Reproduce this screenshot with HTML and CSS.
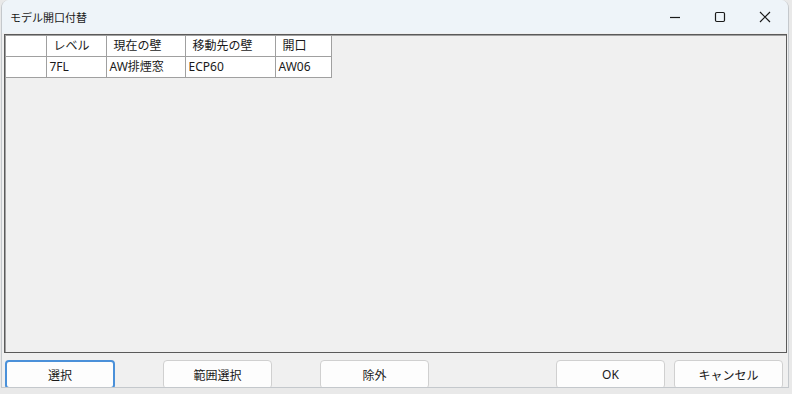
FILE: index.html
```html
<!DOCTYPE html>
<html lang="ja">
<head>
    <meta charset="UTF-8">
    <meta name="viewport" content="width=device-width, initial-scale=1.0">
    <title>モデル開口付替</title>
    <link rel="stylesheet" href="styles.css">
</head>
<body>
    <div class="window">
        <div class="titlebar">
            <div class="title">モデル開口付替</div>
            <div class="controls">
                <div class="ctrl">
                    <svg width="12" height="12" viewBox="0 0 12 12"><path d="M1 6.5h10" stroke="#1a1a1a" stroke-width="1.2"/></svg>
                </div>
                <div class="ctrl">
                    <svg width="12" height="12" viewBox="0 0 12 12"><rect x="1.5" y="1.5" width="9" height="9" rx="1.2" fill="none" stroke="#1a1a1a" stroke-width="1.2"/></svg>
                </div>
                <div class="ctrl">
                    <svg width="12" height="12" viewBox="0 0 12 12"><path d="M1 1l10 10M11 1L1 11" stroke="#1a1a1a" stroke-width="1.2"/></svg>
                </div>
            </div>
        </div>
        <div class="grid">
            <table class="sheet">
                <colgroup>
                    <col class="w0">
                    <col class="w1">
                    <col class="w2">
                    <col class="w3">
                    <col class="w4">
                </colgroup>
                <tr class="head">
                    <td class="rowhead"></td>
                    <td>レベル</td>
                    <td>現在の壁</td>
                    <td>移動先の壁</td>
                    <td>開口</td>
                </tr>
                <tr>
                    <td class="rowhead"></td>
                    <td>7FL</td>
                    <td>AW排煙窓</td>
                    <td>ECP60</td>
                    <td>AW06</td>
                </tr>
            </table>
        </div>
        <div class="buttons">
            <button class="btn focus">選択</button>
            <button class="btn">範囲選択</button>
            <button class="btn">除外</button>
            <div class="spacer"></div>
            <button class="btn">OK</button>
            <button class="btn">キャンセル</button>
        </div>
    </div>
</body>
</html>
```

FILE: styles.css
```css
body {
    margin: 0;
    padding: 0;
    width: 792px;
    height: 394px;
    overflow: hidden;
    background: #e9e9e9;
    font-family: "Noto Sans", "Noto Sans CJK JP", sans-serif;
    font-size: 12px;
    color: #1a1a1a;
}

.window {
    display: flex;
    flex-direction: column;
    width: 786px;
    height: 387px;
    margin-left: 1px;
    border: 1px solid #c4c8cc;
    border-top: none;
    border-radius: 8px 8px 0 0;
    background: #f0f0f0;
    overflow: hidden;
}

.titlebar {
    display: flex;
    align-items: center;
    height: 33px;
    background: #eef4f9;
    flex-shrink: 0;
}

.title {
    flex: 1;
    padding-left: 8px;
    font-size: 11px;
}

.controls {
    display: flex;
    height: 100%;
    padding-right: 1px;
}

.ctrl {
    display: flex;
    align-items: center;
    justify-content: center;
    width: 45px;
    height: 100%;
}

.grid {
    height: 317px;
    margin: 1px 1px 0 2px;
    border: 1px solid #5a5a5a;
    box-shadow: inset 1px 1px 0 #a0a0a0;
    background: #f0f0f0;
    flex-shrink: 0;
}

.sheet {
    table-layout: fixed;
    width: 325px;
    border-collapse: collapse;
    margin: 1px 0 0 1px;
}

.sheet .w0 { width: 40px; }
.sheet .w1 { width: 60px; }
.sheet .w2 { width: 79px; }
.sheet .w3 { width: 90px; }
.sheet .w4 { width: 56px; }

.sheet td {
    height: 20px;
    padding: 0 0 0 3px;
    background: #fff;
    border: 1px solid #a0a0a0;
    border-top: none;
    font-size: 12px;
    line-height: 20px;
    white-space: nowrap;
    overflow: hidden;
}

.sheet .head td {
    padding-left: 7px;
}

.sheet td.rowhead {
    border-left: none;
}

.buttons {
    display: flex;
    gap: 48px;
    padding: 7px 0 0 3px;
}

.spacer {
    flex: 1;
}

.btn {
    width: 109px;
    height: 29px;
    margin: 0;
    padding: 0;
    background: #fdfdfd;
    border: 1px solid #d0d0d0;
    border-radius: 4px;
    font-family: "Noto Sans", "Noto Sans CJK JP", sans-serif;
    font-size: 12px;
    color: #1a1a1a;
}

.btn.focus {
    width: 110px;
    border: 2px solid #4a90d9;
}

.buttons .btn:last-child {
    margin-left: -39px;
    margin-right: 5px;
}
```
